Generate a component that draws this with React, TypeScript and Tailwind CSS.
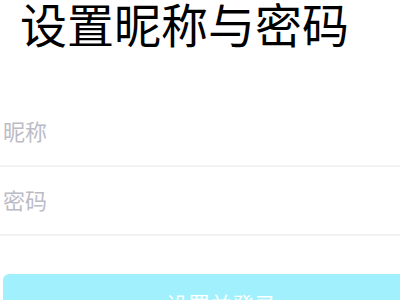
export default function App() {
    return (
        <div className="h-[300px] w-[400px] overflow-hidden bg-white font-['Noto_Sans_CJK_SC','Noto_Sans',sans-serif]">
            {/* Title */}
            <div className="flex h-[98px] items-start pl-[20px]">
                <h1 className="-mt-[1px] text-[47px] leading-none font-normal text-black">设置昵称与密码</h1>
            </div>

            {/* Fields */}
            <div className="flex h-[69px] items-center border-b-2 border-[#f2f2f2] pb-[3px] pl-[3px]">
                <span className="text-[22px] leading-none text-[#bbbcc6]">昵称</span>
            </div>
            <div className="flex h-[69px] items-center border-b-2 border-[#f2f2f2] pb-[3px] pl-[3px]">
                <span className="text-[22px] leading-none text-[#bbbcc6]">密码</span>
            </div>

            {/* Submit */}
            <div className="mt-[38px] pl-[3px]">
                <button
                    type="button"
                    className="flex h-[58px] w-[436px] items-center justify-center rounded-md bg-[#a0f1fd] text-[22px] leading-none text-white"
                >
                    设置并登录
                </button>
            </div>
        </div>
    );
}
